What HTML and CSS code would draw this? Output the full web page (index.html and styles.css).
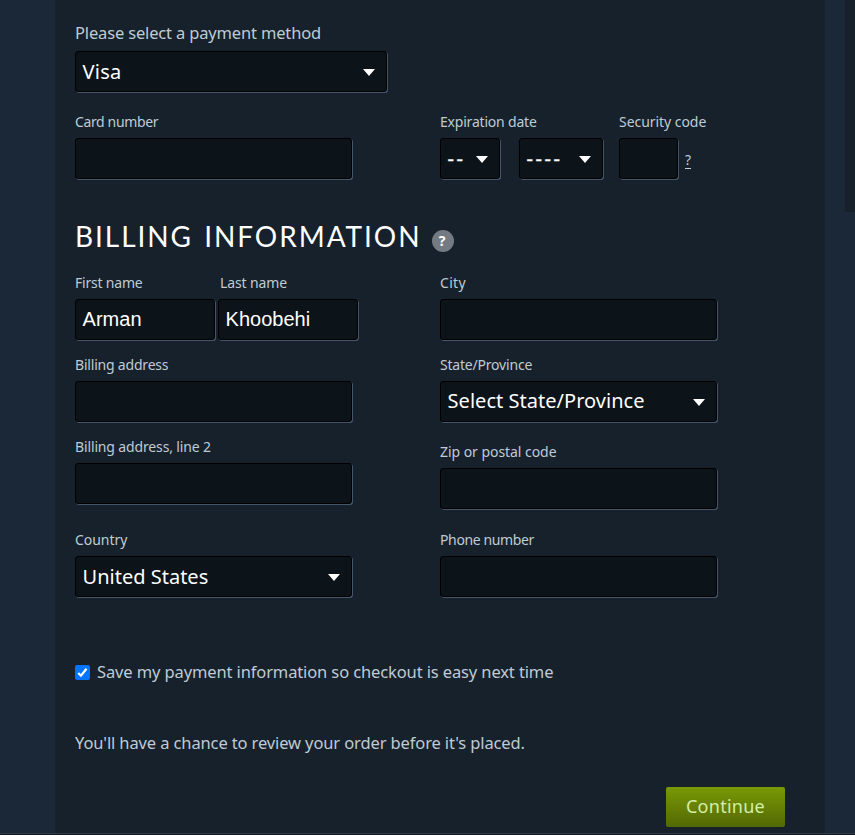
FILE: index.html
```html
<!DOCTYPE html>
<html lang="en">
<head>
<meta charset="utf-8">
<title>Payment</title>
<link rel="stylesheet" href="styles.css">
</head>
<body>
<div class="page">
  <main class="panel">
    <div class="field method">
      <label class="lead">Please select a payment method</label>
      <div class="box"><span class="visa">Visa</span><svg class="arrow" viewBox="0 0 12 7"><path d="M0 0h12L6 7z"/></svg></div>
    </div>

    <div class="columns card-row">
      <div class="field"><label class="tight">Card number</label><div class="box std"></div></div>
      <div class="card-extra">
        <div class="field expiry">
          <label>Expiration date</label>
          <div class="dates">
            <div class="box month"><span class="dash">--</span><svg class="arrow" viewBox="0 0 12 7"><path d="M0 0h12L6 7z"/></svg></div>
            <div class="box year"><span class="dash">----</span><svg class="arrow" viewBox="0 0 12 7"><path d="M0 0h12L6 7z"/></svg></div>
          </div>
        </div>
        <div class="field">
          <label class="normal">Security code</label>
          <div class="security"><div class="box code"></div><a class="what">?</a></div>
        </div>
      </div>
    </div>

    <div class="heading"><h2>BILLING INFORMATION</h2><span class="help">?</span></div>

    <div class="columns">
      <div class="stack">
        <div class="names">
          <div class="field"><label>First name</label><div class="box name"><span>Arman</span></div></div>
          <div class="field"><label class="last">Last name</label><div class="box name"><span>Khoobehi</span></div></div>
        </div>
        <div class="field"><label>Billing address</label><div class="box std"></div></div>
        <div class="field"><label class="line2">Billing address, line 2</label><div class="box std"></div></div>
        <div class="field country"><label class="normal">Country</label><div class="box std"><span>United States</span><svg class="arrow" viewBox="0 0 12 7"><path d="M0 0h12L6 7z"/></svg></div></div>
      </div>
      <div class="stack">
        <div class="field"><label class="city">City</label><div class="box std"></div></div>
        <div class="field"><label>State/Province</label><div class="box std"><span class="state">Select State/Province</span><svg class="arrow" viewBox="0 0 12 7"><path d="M0 0h12L6 7z"/></svg></div></div>
        <div class="field zip"><label class="normal">Zip or postal code</label><div class="box std"></div></div>
        <div class="field phone"><label class="tight">Phone number</label><div class="box std"></div></div>
      </div>
    </div>

    <div class="save"><svg class="check" viewBox="0 0 15 15"><rect width="15" height="15" rx="2"/><path d="M3.2 8l2.7 2.7 5.6-7"/></svg><span>Save my payment information so checkout is easy next time</span></div>
    <p class="review">You'll have a chance to review your order before it's placed.</p>
    <div class="actions"><div class="continue">Continue</div></div>
  </main>
  <aside class="side"></aside>
</div>
<footer class="footer"></footer>
</body>
</html>
```
FILE: styles.css
```css
* { box-sizing: border-box; }
body {
  margin: 0;
  height: 835px;
  overflow: hidden;
  background: #1b2838;
  color: #bfcbd5;
  font-family: "Noto Sans", sans-serif;
}
.page { display: flex; height: 833px; }
.panel { width: 770px; margin-left: 55px; padding: 23px 40px 0 20px; background: #17212b; }
.side { width: 10px; height: 212px; margin-left: 20px; background: #17212b; }
.footer { height: 2px; background: #171a21; border-top: 1px solid #303845; }

.field { display: flex; flex-direction: column; gap: 6px; }
label { height: 20px; line-height: 20px; font-size: 14px; letter-spacing: -.2px; white-space: nowrap; }
label.tight { letter-spacing: -.37px; }
label.normal { letter-spacing: -.05px; }
label.last { padding-left: 2px; letter-spacing: -.12px; }
label.line2 { letter-spacing: -.14px; }
label.city { letter-spacing: .3px; }
label.lead { font-size: 16.5px; letter-spacing: -.16px; }
.box {
  display: flex;
  align-items: center;
  justify-content: space-between;
  height: 41px;
  padding: 0 11px 0 6.6px;
  border: 1px solid #000;
  border-radius: 3px;
  background: #0c1319;
  box-shadow: 1px 1px 0 #45556c;
  color: #fff;
  font-size: 20px;
  line-height: 24px;
  white-space: nowrap;
}
.std { width: 277px; }
.arrow { width: 12px; height: 7px; margin-top: 2px; fill: #fff; }
.method { gap: 8px; }
.method .box { width: 312px; }
.visa { letter-spacing: .26px; }
.state { margin-top: -2px; letter-spacing: .03px; }

.columns { display: grid; grid-template-columns: 365px 1fr; }
.card-row { margin-top: 20px; }
.card-extra { display: flex; }
.expiry { width: 179px; }
.dates { display: flex; gap: 19px; }
.month { width: 60px; }
.year { width: 84px; }
.dash { letter-spacing: 2.5px; -webkit-text-stroke: .4px #fff; }
.security { display: flex; align-items: center; gap: 7px; }
.code { width: 59px; }
.what { margin-top: 3px; font-size: 14px; line-height: 16px; border-bottom: 1px solid #bfcbd5; }

.heading { display: flex; height: 94px; padding-top: 38px; }
h2 { margin: 0; width: 357px; color: #fff; font: 400 28px/39px Lato, sans-serif; letter-spacing: 1.95px; word-spacing: 2px; white-space: nowrap; }
.help {
  width: 22px;
  height: 22px;
  margin-top: 13px;
  border-radius: 50%;
  background: #747a82;
  color: #fff;
  font-size: 14px;
  font-weight: 700;
  line-height: 21px;
  text-align: center;
  padding-right: 2px;
}

.stack { display: flex; flex-direction: column; gap: 15px; }
.names { display: flex; gap: 3px; }
.name { width: 140px; font-family: "Liberation Sans", Arial, sans-serif; }
.name span { margin-top: -2px; }
.country { margin-top: 11px; }
.zip { margin-top: 5px; }
.phone { margin-top: 6px; }

.save { display: flex; align-items: center; gap: 7px; height: 24px; margin-top: 63px; font-size: 16.5px; letter-spacing: -.12px; white-space: nowrap; }
.save span { margin-top: -2px; }
.check { width: 15px; height: 15px; fill: #0075ff; }
.check path { fill: none; stroke: #fff; stroke-width: 2.2; }
.review { margin: 47px 0 0; height: 24px; font-size: 16.5px; line-height: 24px; letter-spacing: -.12px; white-space: nowrap; }
.actions { display: flex; justify-content: flex-end; margin-top: 32px; }
.continue {
  width: 119px;
  height: 40px;
  border-radius: 2px;
  background: linear-gradient(#799905, #536904);
  color: #d2efa9;
  font-size: 18px;
  line-height: 39px;
  letter-spacing: .26px;
  text-align: center;
}
```
